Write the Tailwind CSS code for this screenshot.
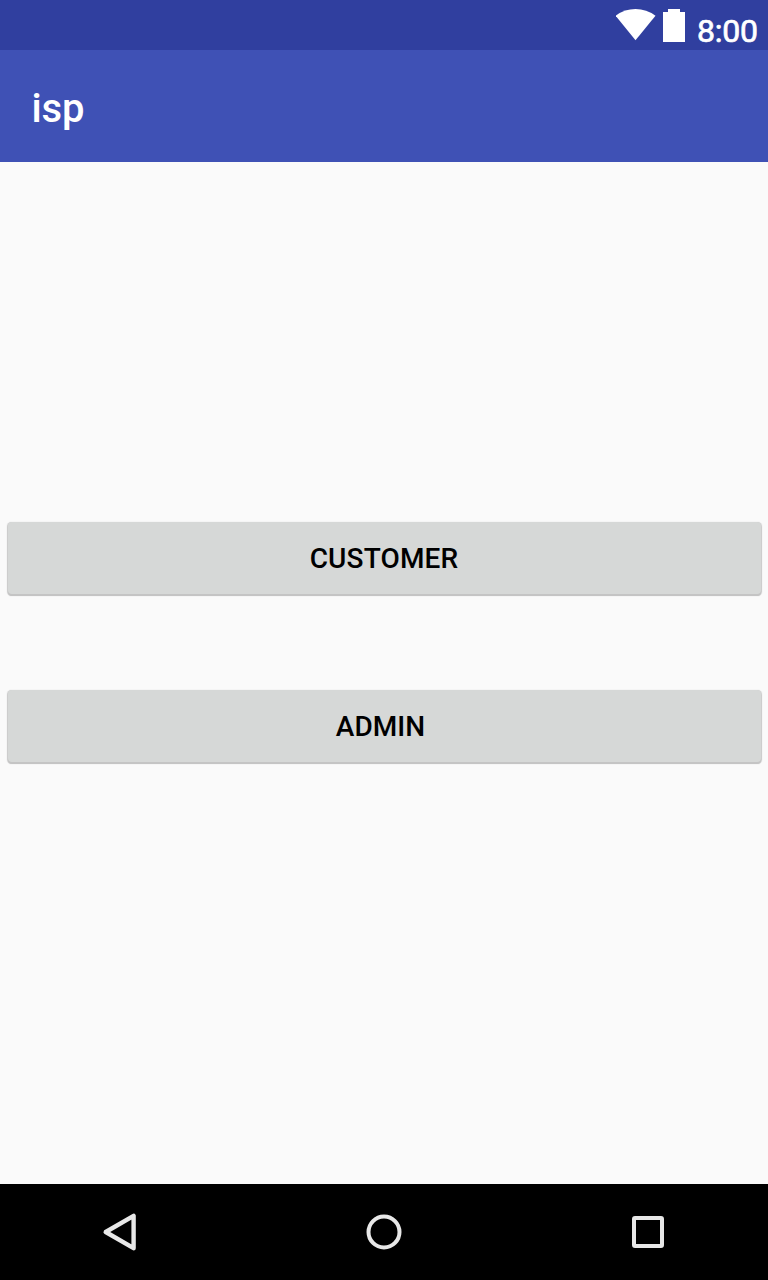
<!DOCTYPE html>
<html lang="en">
<head>
<meta charset="utf-8">
<title>isp</title>
<script src="https://cdn.jsdelivr.net/npm/@tailwindcss/browser@4"></script>
</head>
<body class="w-[768px] h-[1280px] overflow-hidden flex flex-col bg-[#fafafa] font-['Roboto',sans-serif]">
<div class="h-[50px] shrink-0 bg-[#303f9f] flex items-start justify-end text-white">
<svg class="w-[40px] h-[32px] mt-[9px]" viewBox="0 0 40 32" fill="#fff"><path d="M-.4 6.7Q8.5 0 19.5 0T39.5 6.7L19.5 31.2Z"/></svg>
<svg class="w-[22px] h-[33px] mt-[9px] ml-[7px]" viewBox="0 0 22 33" fill="#fff"><path d="M0 3H5V0H17V3H22V33H0Z"/></svg>
<span class="w-[71px] ml-[12px] mt-[12px] text-[32px] leading-[38px] font-normal tracking-[-0.2px] [-webkit-text-stroke:0.7px_white]">8:00</span>
</div>
<header class="h-[112px] shrink-0 bg-[#3f51b5] flex items-center pl-[31.5px] pr-8 pt-[6px]"><h1 class="text-[40px] leading-[48px] font-medium text-white tracking-[-0.2px]">isp</h1></header>
<main class="grow flex flex-col px-[7.5px] pt-[360px] gap-[96px]">
<button class="h-[72px] rounded-[4px] bg-[#d6d8d7] text-[28px] tracking-[0.15px] font-medium text-black shadow-[0_2px_0.5px_0_#c4c4c4,0_1px_1px_0.5px_#c8c8c8] pt-[2px]">CUSTOMER</button>
<button class="h-[72px] rounded-[4px] bg-[#d6d8d7] text-[28px] tracking-[0.05px] font-medium text-black shadow-[0_2px_0.5px_0_#c4c4c4,0_1px_1px_0.5px_#c8c8c8] pt-[2px] pr-[7px]">ADMIN</button>
</main>
<nav class="h-[96px] shrink-0 bg-black flex items-center justify-between px-[100px]">
<svg class="w-10 h-10" viewBox="0 0 40 40" fill="none" stroke="#e8e8e8" stroke-width="4.4" stroke-linejoin="round"><path d="M33.6 3.8V36.2L5.7 20Z"/></svg>
<svg class="w-10 h-10" viewBox="0 0 40 40" fill="none" stroke="#e8e8e8" stroke-width="4"><circle cx="20" cy="20" r="15.5"/></svg>
<svg class="w-10 h-10" viewBox="0 0 40 40" fill="none" stroke="#e8e8e8" stroke-width="4"><rect x="6" y="6" width="28" height="28" rx="1"/></svg>
</nav>
</body>
</html>
